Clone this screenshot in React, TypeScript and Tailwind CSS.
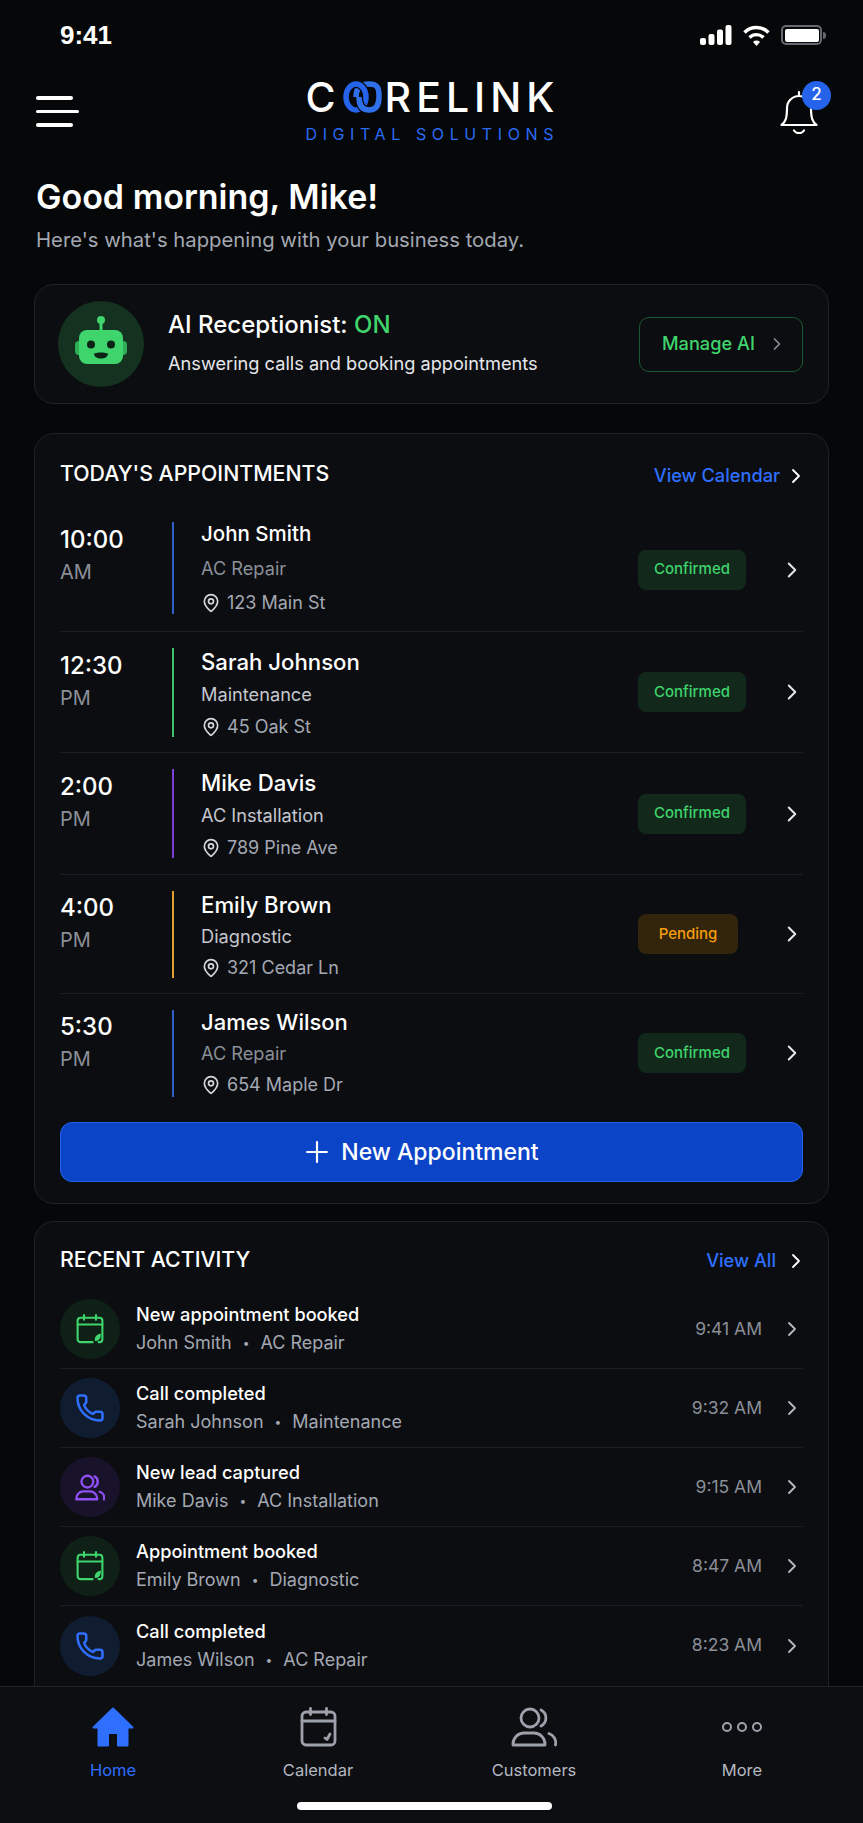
import { ChevronRight, MapPin, Plus, Phone } from 'lucide-react'

const font = { fontFamily: 'Inter' }

const appointments = [
  { time: '10:00', mer: 'AM', name: 'John Smith', service: 'AC Repair', address: '123 Main St', bar: 'bg-[#2f5fc4] h-[92px] mb-[3px]', status: 'Confirmed', h: 'h-[124px]', lead: 'leading-[34.5px] mb-[2px]', size: 'text-[20.5px]', tone: 'text-[#8a8f98]', timeBox: 'mb-[28px]' },
  { time: '12:30', mer: 'PM', name: 'Sarah Johnson', service: 'Maintenance', address: '45 Oak St', bar: 'bg-[#3fbf6a] h-[89px]', status: 'Confirmed', h: 'h-[121px]', lead: 'leading-[32.5px] mt-[5px]', size: 'text-[22.2px]', tone: 'text-[#c4c7cf]', timeBox: 'mb-[20px]' },
  { time: '2:00', mer: 'PM', name: 'Mike Davis', service: 'AC Installation', address: '789 Pine Ave', bar: 'bg-[#7c3fd6] h-[89px]', status: 'Confirmed', h: 'h-[122px]', lead: 'leading-[32.5px] mt-[4px]', size: 'text-[22.2px]', tone: 'text-[#c4c7cf]', timeBox: 'mb-[21px]' },
  { time: '4:00', mer: 'PM', name: 'Emily Brown', service: 'Diagnostic', address: '321 Cedar Ln', bar: 'bg-[#e0a030] h-[87px]', status: 'Pending', h: 'h-[119px]', lead: 'leading-[31.5px] mt-[5px]', size: 'text-[22.2px]', tone: 'text-[#c4c7cf]', timeBox: 'mb-[20px]' },
  { time: '5:30', mer: 'PM', name: 'James Wilson', service: 'AC Repair', address: '654 Maple Dr', bar: 'bg-[#2f5fc4] h-[87px]', status: 'Confirmed', h: 'h-[118px]', lead: 'leading-[31px] mt-[1px]', size: 'text-[22px]', tone: 'text-[#8a8f98]', timeBox: 'mb-[20px]' },
]

const activity = [
  { kind: 'cal', title: 'New appointment booked', who: 'John Smith', what: 'AC Repair', time: '9:41 AM' },
  { kind: 'call', title: 'Call completed', who: 'Sarah Johnson', what: 'Maintenance', time: '9:32 AM' },
  { kind: 'lead', title: 'New lead captured', who: 'Mike Davis', what: 'AC Installation', time: '9:15 AM' },
  { kind: 'cal', title: 'Appointment booked', who: 'Emily Brown', what: 'Diagnostic', time: '8:47 AM' },
  { kind: 'call', title: 'Call completed', who: 'James Wilson', what: 'AC Repair', time: '8:23 AM' },
]

function CalIcon({ w, h, color, leaf }: { w: number; h: number; color: string; leaf?: boolean }) {
  return (
    <svg width={w} height={h} viewBox="0 0 37 40" fill="none" stroke={color} strokeWidth="2.8" strokeLinecap="round" strokeLinejoin="round">
      {leaf ? (
        <path d="M22 37.500H6a4 4 0 0 1-4-4V9a4 4 0 0 1 4-4h25a4 4 0 0 1 4 4v24.500a4 4 0 0 1-4 4h-1" />
      ) : (
        <rect x="2" y="5" width="33" height="33" rx="4" />
      )}
      <path d="M2 14h33M10.500 1.500v6M26.500 1.500v6" />
      {leaf ? (
        <path d="M25 36c-1-5 2-9 8-10 0 6-2 9-6 10z" fill={color} stroke="none" />
      ) : (
        <path d="M25 31l2 1.500L30 27" />
      )}
    </svg>
  )
}

function PeopleIcon({ w, h, color, stroke = 2.6 }: { w: number; h: number; color: string; stroke?: number }) {
  return (
    <svg width={w} height={h} viewBox="0 0 46 40" fill="none" stroke={color} strokeWidth={stroke} strokeLinecap="round" strokeLinejoin="round">
      <circle cx="19" cy="11" r="9" />
      <path d="M30 3a9 9 0 0 1 0 16" />
      <path d="M2 38v-1a11 11 0 0 1 11-11h10a11 11 0 0 1 11 11v1z" />
      <path d="M38 26.500a10 10 0 0 1 6.500 11.500" />
    </svg>
  )
}

function ActivityIcon({ kind }: { kind: string }) {
  if (kind === 'cal') {
    return (
      <div className="flex h-[60px] w-[60px] items-center justify-center rounded-full bg-[#0f2116]">
        <CalIcon w={28} h={30} color="#3fd46c" leaf />
      </div>
    )
  }
  if (kind === 'call') {
    return (
      <div className="flex h-[60px] w-[60px] items-center justify-center rounded-full bg-[#101c30]">
        <Phone size={30} color="#2f6fff" strokeWidth={2} />
      </div>
    )
  }
  return (
    <div className="flex h-[60px] w-[60px] items-center justify-center rounded-full bg-[#19122b]">
      <PeopleIcon w={30} h={27} color="#8f4ff5" stroke={3.6} />
    </div>
  )
}

function Robot() {
  return (
    <svg width="56" height="56" viewBox="0 0 56 56">
      <circle cx="28" cy="4" r="4" fill="#3fd46c" />
      <rect x="26.500" y="7" width="3" height="8" fill="#3fd46c" />
      <rect x="2" y="25" width="8" height="14" rx="4" fill="#2fae58" />
      <rect x="46" y="25" width="8" height="14" rx="4" fill="#2fae58" />
      <rect x="6" y="14" width="44" height="34" rx="8" fill="#3fd46c" />
      <circle cx="18" cy="28.500" r="4" fill="#0c2416" />
      <circle cx="38" cy="28.500" r="4" fill="#0c2416" />
      <path d="M21 37.500c4-1.500 10-1.500 14 0 0 3-3 5-7 5s-7-2-7-5z" fill="#0c2416" />
    </svg>
  )
}

function Logo() {
  return (
    <div className="mb-[2px] ml-[6px] flex flex-col items-start">
      <div className="flex h-[34px] items-center text-[41px] leading-[34px] font-medium tracking-[5px] text-white">
        <span>C</span>
        <svg width="39" height="32" viewBox="0 0 39 32" fill="none" className="mr-[3px] ml-[2px]">
          <path d="M13 16c0-7 3-13 13-13s10 6 10 13" stroke="#2f6fe8" strokeWidth="5.500" />
          <ellipse cx="13" cy="16" rx="10" ry="13" stroke="#060708" strokeWidth="8" />
          <ellipse cx="13" cy="16" rx="10" ry="13" stroke="#2563eb" strokeWidth="5.500" />
          <path d="M36 16c0 7-2 13-10 13s-10-6-10-13" stroke="#060708" strokeWidth="8" />
          <path d="M36 16c0 7-2 13-10 13s-10-6-10-13" stroke="#2f6fe8" strokeWidth="5.500" />
        </svg>
        <span>RELINK</span>
      </div>
      <div className="mt-[12px] text-[16px] leading-[16px] tracking-[5.6px] text-[#2a6bf5]">DIGITAL SOLUTIONS</div>
    </div>
  )
}

export default function App() {
  return (
    <div className="relative h-[1823px] w-[863px] overflow-hidden bg-[#060708] text-white" style={font}>
      {/* status bar */}
      <div className="flex h-[70px] items-center justify-between pr-[37px] pl-[60px]">
        <span className="text-[26px] font-semibold" style={{ fontFamily: 'Liberation Sans' }}>9:41</span>
        <div className="flex items-center gap-[11px]">
          <svg width="32" height="20" viewBox="0 0 32 20" fill="#fff">
            <rect x="0" y="13" width="6" height="7" rx="2" />
            <rect x="8.500" y="9" width="6" height="11" rx="2" />
            <rect x="17" y="4.500" width="6" height="15.500" rx="2" />
            <rect x="25.500" y="0" width="6" height="20" rx="2" />
          </svg>
          <svg width="27" height="21" viewBox="0 0 27 21" fill="none" stroke="#fff" strokeWidth="3.400">
            <path d="M1.500 7.500a17 17 0 0 1 24 0" />
            <path d="M6.500 12.500a10 10 0 0 1 14 0" />
            <path d="M13.500 21l-3.500-4a5 5 0 0 1 7 0z" fill="#fff" stroke="none" />
          </svg>
          <div className="flex items-center gap-[1px]">
            <div className="flex h-[20px] w-[41px] items-center rounded-[5px] border-2 border-[#666a70] p-[1.5px]">
              <div className="h-full w-full rounded-[2px] bg-white" />
            </div>
            <div className="h-[7px] w-[3px] rounded-r-full bg-[#666a70]" />
          </div>
        </div>
      </div>

      {/* header */}
      <div className="flex h-[83px] items-center justify-between pr-[45px] pl-[36px]">
        <div className="flex w-[43px] flex-col gap-[10px]">
          <div className="h-[3.500px] w-[37px] rounded bg-white" />
          <div className="h-[3.500px] w-[43px] rounded bg-white" />
          <div className="h-[3.500px] w-[37px] rounded bg-white" />
        </div>
        <Logo />
        <div className="relative">
          <svg width="38" height="44" viewBox="0 0 38 44" fill="none" stroke="#fff" strokeWidth="2.200" strokeLinecap="round" strokeLinejoin="round">
            <path d="M19 2v3M7 18a12 12 0 0 1 24 0c0 10 1.500 14 5.500 17h-35C5.500 32 7 28 7 18z" />
            <path d="M14 40.500a6 6 0 0 0 10 0" />
          </svg>
          <div className="absolute -top-[9px] -right-[13px] flex h-[29px] w-[29px] items-center justify-center rounded-full bg-[#2563eb] text-[17px] font-medium">2</div>
        </div>
      </div>

      {/* greeting */}
      <div className="px-[36px] pt-[22px]">
        <h1 className="text-[34px] leading-[44px] font-semibold">Good morning, Mike!</h1>
        <p className="mt-[5px] text-[20.3px] leading-[32px] text-[#a3a8b3]">Here's what's happening with your business today.</p>
      </div>

      <div className="mt-[28px] flex flex-col px-[34px]">
        {/* ai receptionist */}
        <div className="flex h-[120px] items-center rounded-[20px] border border-[#1f2228] bg-[#0c0d10] pr-[25px] pl-[23px]">
          <div className="flex h-[86px] w-[86px] shrink-0 items-center justify-center rounded-full bg-[#14321f]">
            <Robot />
          </div>
          <div className="ml-[24px] flex-1">
            <div className="text-[24px] leading-[32px] font-medium">
              AI Receptionist: <span className="text-[#3fd46c]">ON</span>
            </div>
            <div className="mt-[9px] mb-[3px] text-[18.2px] leading-[26px] text-[#e5e7eb]">Answering calls and booking appointments</div>
          </div>
          <div className="flex h-[55px] w-[164px] items-center gap-[12px] rounded-[10px] border border-[#1c5a34] pl-[22px] text-[18.2px] font-medium text-[#3fd46c]">
            Manage AI
            <ChevronRight size={20} color="#8a8f98" />
          </div>
        </div>

        {/* today's appointments */}
        <div className="mt-[29px] h-[771px] rounded-[20px] border border-[#1f2228] bg-[#0c0d10] px-[25px]">
          <div className="flex h-[74px] items-start justify-between pt-[22px]">
            <div className="text-[21.3px] leading-[34px] font-medium">TODAY'S APPOINTMENTS</div>
            <div className="mt-[6px] mr-[-5px] flex items-center gap-[4px] text-[18.2px] font-medium text-[#2f6fff]">
              View Calendar
              <ChevronRight size={24} color="#fff" strokeWidth={1.8} />
            </div>
          </div>
          {appointments.map((a, i) => (
            <div key={a.name} className={`flex items-center ${a.h} ${i < 4 ? 'border-b border-[#1c1e23]' : ''}`}>
              <div className={`w-[112px] shrink-0 ${a.timeBox}`}>
                <div className="text-[24px] leading-[32px] font-medium">{a.time}</div>
                <div className="text-[20px] leading-[32px] text-[#8a8f98]">{a.mer}</div>
              </div>
              <div className={`w-[2px] shrink-0 ${a.bar}`} />
              <div className={`ml-[27px] flex-1 ${a.lead}`}>
                <div className={`${a.size} font-medium`}>{a.name}</div>
                <div className={`text-[18.2px] ${a.tone}`}>{a.service}</div>
                <div className="flex items-center gap-[6px] text-[18px] text-[#a3a8b3]">
                  <MapPin size={20} color="#d5d7dc" />
                  {a.address}
                </div>
              </div>
              {a.status === 'Confirmed' ? (
                <div className="flex h-[40px] w-[108px] items-center justify-center rounded-[8px] bg-[#11281b] text-[15px] font-medium text-[#3fd46c]">Confirmed</div>
              ) : (
                <div className="mr-[8px] flex h-[40px] w-[100px] items-center justify-center rounded-[8px] bg-[#33240c] text-[15px] font-medium text-[#f59e0b]">Pending</div>
              )}
              <ChevronRight size={26} color="#e5e7eb" strokeWidth={1.8} className="mr-[-2px] ml-[33px]" />
            </div>
          ))}
          <div className="mt-[10px] flex h-[60px] items-center justify-center gap-[7px] rounded-[12px] border border-[#2463e8] bg-[#0c44c8] pr-[24px] text-[23px] font-medium">
            <Plus size={34} strokeWidth={1.5} />
            New Appointment
          </div>
        </div>

        {/* recent activity */}
        <div className="mt-[17px] rounded-t-[20px] border border-[#1f2228] bg-[#0c0d10] px-[25px] pb-[20px]">
          <div className="flex h-[68px] items-start justify-between pt-[20px]">
            <div className="text-[21.3px] leading-[34px] font-medium">RECENT ACTIVITY</div>
            <div className="mt-[5px] mr-[-5px] flex items-center gap-[8px] text-[18.2px] font-medium text-[#2f6fff]">
              View All
              <ChevronRight size={24} color="#fff" strokeWidth={1.8} />
            </div>
          </div>
          {activity.map((a, i) => (
            <div key={a.time} className={`flex h-[79px] items-center ${i < 4 ? 'border-b border-[#1c1e23]' : ''}`}>
              <ActivityIcon kind={a.kind} />
              <div className="ml-[16px] flex-1">
                <div className="text-[18.2px] leading-[28px] font-medium">{a.title}</div>
                <div className="flex items-center gap-[11px] text-[18px] leading-[30px] text-[#a3a8b3]">
                  <span>{a.who}</span>
                  <span className="text-[12px]">•</span>
                  <span>{a.what}</span>
                </div>
              </div>
              <div className="text-[17.5px] text-[#8a8f98]">{a.time}</div>
              <ChevronRight size={24} color="#b4b8c0" strokeWidth={1.8} className="mr-[-1px] ml-[18px]" />
            </div>
          ))}
        </div>
      </div>

      {/* bottom nav */}
      <div className="absolute right-0 bottom-0 left-0 h-[137px] border-t border-[#1f2228] bg-[#0d0e12]">
        <div className="grid grid-cols-[226px_184px_248px_168px] pt-[20px] text-center text-[16.5px] leading-[24px] text-[#b4b8c0]">
          <div className="flex flex-col items-center text-[#2f6fff]">
            <svg width="42" height="40" viewBox="0 0 42 40" fill="#2f6fff" stroke="#2f6fff" strokeWidth="2" strokeLinejoin="round">
              <path d="M21 1.500L40.500 20.500h-5v18H26V26H16v12.500H6.500v-18h-5z" />
            </svg>
            <span className="mt-[11px]">Home</span>
          </div>
          <div className="flex flex-col items-center">
            <CalIcon w={37} h={40} color="#9ca1ab" />
            <span className="mt-[11px]">Calendar</span>
          </div>
          <div className="flex flex-col items-center">
            <PeopleIcon w={46} h={40} color="#9ca1ab" stroke={2.8} />
            <span className="mt-[11px]">Customers</span>
          </div>
          <div className="flex flex-col items-center">
            <div className="flex h-[40px] items-center gap-[5px]">
              {[0, 1, 2].map(d => (
                <div key={d} className="h-[10px] w-[10px] rounded-full border-2 border-[#9ca1ab]" />
              ))}
            </div>
            <span className="mt-[11px]">More</span>
          </div>
        </div>
      </div>
      <div className="absolute bottom-[13px] left-[297px] h-[8px] w-[255px] rounded-full bg-white" />
    </div>
  )
}
